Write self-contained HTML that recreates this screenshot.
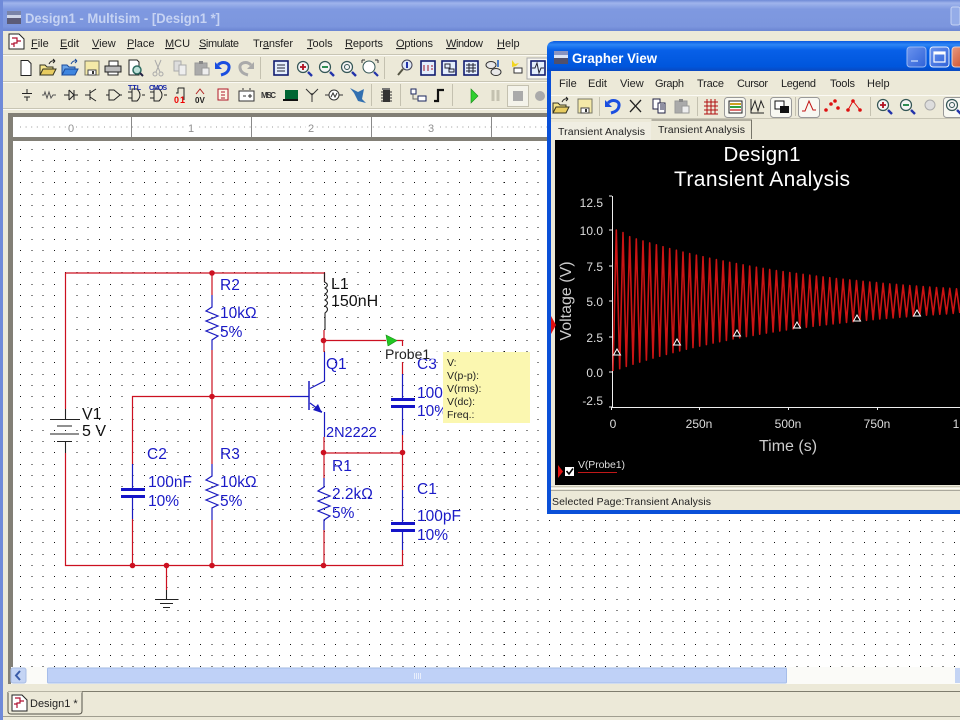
<!DOCTYPE html>
<html><head><meta charset="utf-8"><title>Multisim</title>
<style>html,body{margin:0;padding:0;background:#ece9d8;overflow:hidden}svg{display:block}text{font-family:"Liberation Sans",sans-serif}</style></head>
<body>
<svg width="960" height="720" viewBox="0 0 960 720" xmlns="http://www.w3.org/2000/svg">
<defs>
<linearGradient id="tb" x1="0" y1="0" x2="0" y2="1"><stop offset="0" stop-color="#6f8ad6"/><stop offset=".1" stop-color="#9fb4ec"/><stop offset=".3" stop-color="#7f99e0"/><stop offset=".85" stop-color="#7c96de"/><stop offset="1" stop-color="#6b85d2"/></linearGradient>
<linearGradient id="gb" x1="0" y1="0" x2="0" y2="1"><stop offset="0" stop-color="#0a5ae0"/><stop offset=".12" stop-color="#2d86f5"/><stop offset=".3" stop-color="#0860e8"/><stop offset=".85" stop-color="#0056dc"/><stop offset="1" stop-color="#0a48c0"/></linearGradient>
<linearGradient id="btn" x1="0" y1="0" x2="1" y2="1"><stop offset="0" stop-color="#6a93ee"/><stop offset="1" stop-color="#2f62d8"/></linearGradient>
<linearGradient id="cl" x1="0" y1="0" x2="1" y2="1"><stop offset="0" stop-color="#e89a80"/><stop offset="1" stop-color="#c8421c"/></linearGradient>
<g id="doc"><path d="M-5-7.500H2L5-4.500V7.500H-5Z" fill="#fff" stroke="#222"/></g>
<g id="open"><path d="M-8 7V-3H-3L-1-1H5V7Z" fill="#f6e58c" stroke="#332"/><path d="M-8 7L-5 1H8L5 7Z" fill="#e8cc60" stroke="#332"/><path d="M1-4Q3-8 7-7M7-7L5-9M7-7L5-5" stroke="#222" fill="none"/></g>
<g id="bfold"><path d="M-8 7V-3H-3L-1-1H5V7Z" fill="#6aa4e8" stroke="#1c4c9c"/><path d="M-8 7L-5 1H8L5 7Z" fill="#3f86e0" stroke="#1c4c9c"/><path d="M1-4Q3-8 7-7M7-7L5-9M7-7L5-5" stroke="#1c4c9c" fill="none"/></g>
<g id="save"><path d="M-7-7H7V7H-7Z" fill="#f4e9a8" stroke="#776"/><path d="M-4 2H4V7H-4Z" fill="#fff" stroke="#444"/><path d="M1 3V6" stroke="#333" stroke-width="2"/></g>
<g id="print"><path d="M-4-7H5V-2H-4Z" fill="#fff" stroke="#222"/><path d="M-8-2H8V4H-8Z" fill="#bbb" stroke="#222"/><path d="M-5 4H5V7H-5Z" fill="#fff" stroke="#222"/></g>
<g id="prev"><path d="M-6-8H2L4-6V7H-6Z" fill="#fff" stroke="#222"/><circle cx="2" cy="2" r="4" fill="#bde0d8" stroke="#2c6c60" stroke-width="1.500"/><path d="M5 5L8 8" stroke="#224" stroke-width="2"/></g>
<g id="cut"><path d="M-3-8L2 4M3-8L-2 4" stroke="#aaa" fill="none"/><circle cx="-3" cy="6" r="2" fill="none" stroke="#aaa"/><circle cx="3" cy="6" r="2" fill="none" stroke="#aaa"/></g>
<g id="copyg"><path d="M-6-7H1V3H-6Z" fill="#ddd" stroke="#aaa"/><path d="M-1-3H6V7H-1Z" fill="#eee" stroke="#aaa"/></g>
<g id="pasteg"><path d="M-7-5H5V7H-7Z" fill="#aaa" stroke="#999"/><path d="M-3-7H1V-4H-3Z" fill="#888"/><path d="M0 0H7V7H0Z" fill="#eee" stroke="#999"/></g>
<g id="copyk"><path d="M-6-7H1V3H-6Z" fill="#fff" stroke="#224"/><path d="M-1-3H6V7H-1Z" fill="#fff" stroke="#224"/><path d="M1-1H5M1 1H5M1 3H5" stroke="#224"/></g>
<g id="undo"><path d="M-8-6V1H-1Z" fill="#1a4ee0"/><path d="M-5-3C-1-7 7-6 6 0C5.500 4 2 6-2 7" fill="none" stroke="#1a4ee0" stroke-width="3"/></g>
<g id="redo"><path d="M8-6V1H1Z" fill="#aaa"/><path d="M5-3C1-7-7-6-6 0C-5.500 4-2 6 2 7" fill="none" stroke="#aaa" stroke-width="3"/></g>
<g id="zin"><circle cx="-1" cy="-1" r="5.500" fill="#f4f4f4" stroke="#355" stroke-width="1.200"/><path d="M4 4L8 8" stroke="#23a" stroke-width="2.400"/><path d="M-4-1H2M-1-4V2" stroke="#b01020" stroke-width="1.800"/></g>
<g id="zout"><circle cx="-1" cy="-1" r="5.500" fill="#f4f4f4" stroke="#355" stroke-width="1.200"/><path d="M4 4L8 8" stroke="#23a" stroke-width="2.400"/><path d="M-4-1H2" stroke="#178040" stroke-width="1.800"/></g>
<g id="zfit"><circle cx="-1" cy="-1" r="5.500" fill="#f4f4f4" stroke="#355" stroke-width="1.200"/><path d="M4 4L8 8" stroke="#23a" stroke-width="2.400"/><circle cx="-1" cy="-1" r="2.500" fill="none" stroke="#355"/></g>
<g id="zarea"><circle cx="-1" cy="-1" r="6" fill="#fff" stroke="#355"/><path d="M4 4L8 8" stroke="#23a" stroke-width="2.200"/><path d="M-8-8H-5M-8-8V-5M5-8H8M8-8V-5" stroke="#333"/></g>
<g id="panel"><rect x="-7" y="-7" width="14" height="14" fill="#e4eefc" stroke="#111c70" stroke-width="1.600"/></g>
<g id="mag"><circle cx="2" cy="-3" r="5" fill="#dfe8f8" stroke="#445"/><path d="M-2 1L-7 7" stroke="#554" stroke-width="2"/><path d="M2-6V0" stroke="#23a" stroke-width="2"/></g>
</defs>

<!-- window frame -->
<rect width="960" height="720" fill="#ece9d8"/>
<rect width="960" height="31" fill="url(#tb)"/>
<rect x="0" y="0" width="3" height="720" fill="#6f8ad9"/>
<g transform="translate(14,17)"><rect x="-7" y="-6" width="14" height="4" fill="#7a84a8"/><rect x="-7" y="-2" width="14" height="3" fill="#cfd6e8"/><rect x="-7" y="1" width="14" height="6" fill="#5c5c78"/></g>
<text x="25" y="23" font-size="14" font-weight="bold" fill="#c6d3f3" textLength="195" lengthAdjust="spacingAndGlyphs">Design1 - Multisim - [Design1 *]</text>
<rect x="951" y="7" width="9" height="18" rx="2" fill="#94ace8" stroke="#c6d3f3"/>

<!-- menu -->
<rect x="3" y="31" width="957" height="23" fill="#ece9d8"/>
<g transform="translate(16,43)"><path d="M-7-9H3L8-4V6H-7Z" fill="#fff" stroke="#222"/><path d="M-4-5H1V0H-2V4M1-2H5M-5 1H-2" fill="none" stroke="#b01030" stroke-width="1.200"/></g>
<g font-size="11" fill="#222">
<text x="31" y="47"><tspan text-decoration="underline">F</tspan>ile</text>
<text x="60" y="47"><tspan text-decoration="underline">E</tspan>dit</text>
<text x="92" y="47"><tspan text-decoration="underline">V</tspan>iew</text>
<text x="127" y="47"><tspan text-decoration="underline">P</tspan>lace</text>
<text x="165" y="47"><tspan text-decoration="underline">M</tspan>CU</text>
<text x="199" y="47" textLength="40"><tspan text-decoration="underline">S</tspan>imulate</text>
<text x="253" y="47" textLength="40">Tr<tspan text-decoration="underline">a</tspan>nsfer</text>
<text x="307" y="47"><tspan text-decoration="underline">T</tspan>ools</text>
<text x="345" y="47" textLength="38"><tspan text-decoration="underline">R</tspan>eports</text>
<text x="396" y="47" textLength="37"><tspan text-decoration="underline">O</tspan>ptions</text>
<text x="446" y="47" textLength="37"><tspan text-decoration="underline">W</tspan>indow</text>
<text x="497" y="47"><tspan text-decoration="underline">H</tspan>elp</text>
</g>
<path d="M3 54.500H960" stroke="#c8c5b4"/><path d="M3 55.500H960" stroke="#fbfaf4"/>
<path d="M3 81.500H960" stroke="#c8c5b4"/><path d="M3 82.500H960" stroke="#fbfaf4"/>
<path d="M3 108.500H960" stroke="#c8c5b4"/><path d="M3 109.500H960" stroke="#fbfaf4"/>

<!-- toolbar 1 -->
<use href="#doc" x="26" y="68"/><use href="#open" x="48" y="68"/><use href="#bfold" x="70" y="68"/><use href="#save" x="92" y="68"/><use href="#print" x="113" y="68"/><use href="#prev" x="135" y="68"/><use href="#cut" x="158" y="68"/><use href="#copyg" x="180" y="68"/><use href="#pasteg" x="202" y="68"/><use href="#undo" x="223" y="68"/><use href="#redo" x="246" y="68"/>
<path d="M260.500 57V79M384.500 57V79" stroke="#c4c1b0"/>
<use href="#panel" x="281" y="68"/><path d="M277 65H285M277 68H285M277 71H285" stroke="#223"/>
<use href="#zin" x="304" y="68"/><use href="#zout" x="326" y="68"/><use href="#zfit" x="348" y="68"/><use href="#zarea" x="370" y="68"/>
<use href="#mag" x="405" y="68"/>
<use href="#panel" x="428" y="68"/><path d="M424 65V71M428 65V71M431 66H433M431 69H433" stroke="#a01020"/>
<use href="#panel" x="449" y="68"/><path d="M445 64H450V68H445ZM449 69H454V72H449Z" fill="none" stroke="#223"/>
<use href="#panel" x="471" y="68"/><path d="M466 65H476M466 68H476M466 71H476M469 63V73M473 63V73" stroke="#223"/>
<ellipse cx="491" cy="65" rx="5" ry="3.500" fill="#e8e8e8" stroke="#333"/><ellipse cx="496" cy="72" rx="5" ry="3.500" fill="#e8e8e8" stroke="#333"/><path d="M498 60V67" stroke="#1a5ac0" stroke-width="1.500"/>
<path d="M512 60L515 64L519 63L516 66L512 67Z" fill="#f2d620"/><rect x="514" y="68" width="8" height="5" fill="#fff" stroke="#333"/>
<rect x="527" y="58" width="21" height="21" fill="#f8f7f0" stroke="#aaa"/><use href="#panel" x="538" y="68"/><path d="M532 68H535L537 63L539 73L541 68H544" stroke="#223" fill="none"/>

<!-- toolbar 2 -->
<g fill="none" stroke="#222">
<path d="M27 89V93M22 93.500H32M24 97H30M27 97V101"/>
<path d="M42 95H44L45 92L47 98L49 92L51 98L53 95H56" stroke="#555"/>
<path d="M64 95H69M74 95H78M69 90V100M74 90V100M69 90L74 95L69 100" />
<path d="M85 95H90M90 90V100M90 93L96 89M90 97L96 101"/>
<path d="M106 95H109M109 90H114L120 95L114 100H109ZM120 95H122"/>
<path d="M128 92H132M128 98H132M132 89V101H137Q143 95 137 89ZM142 95H145"/>
</g>
<text x="128" y="90" font-size="7" font-weight="bold" fill="#1a2aa8" textLength="13">TTL</text>
<path d="M150 92H154M150 98H154M154 89V101H159Q165 95 159 89ZM164 95H167" fill="none" stroke="#222"/>
<text x="149" y="90" font-size="7" font-weight="bold" fill="#1a2aa8" textLength="18">CMOS</text>
<path d="M178 88H184V100M176 93H178V88" fill="none" stroke="#222"/><text x="174" y="103" font-size="9" font-weight="bold" fill="#e00">0</text><text x="180" y="103" font-size="9" font-weight="bold" fill="#e00">1</text>
<path d="M196 94L200 89L204 94" fill="none" stroke="#b02020"/><text x="195" y="103" font-size="8" font-weight="bold" fill="#222">0V</text>
<rect x="218" y="89" width="10" height="11" fill="#fdf6e8" stroke="#b01828"/><path d="M221 92H225M221 95H225M221 98H225" stroke="#b01828"/>
<rect x="239" y="91" width="15" height="10" fill="#fff" stroke="#333"/><path d="M243 90V88M250 90V88" stroke="#333"/><path d="M243 96H246M250 94V98M248 96H252" stroke="#333"/>
<text x="261" y="98" font-size="8" font-weight="bold" fill="#333" textLength="15">MISC</text>
<rect x="285" y="90" width="13" height="9" fill="#063"/><path d="M283 100H298" stroke="#111" stroke-width="2"/>
<path d="M312 102V93M306 89L312 95L318 89" fill="none" stroke="#333"/>
<circle cx="334" cy="95" r="5" fill="#fff" stroke="#333"/><path d="M325 95H329M339 95H343M331 97L333 93L335 97L337 93" fill="none" stroke="#333"/>
<path d="M350 88L358 92L364 89L362 99L366 103L358 101L354 93Z" fill="#3270b0"/>
<path d="M371.500 84V106M400.500 84V106M452.500 84V106" stroke="#c4c1b0"/>
<rect x="383" y="90" width="7" height="12" fill="#333"/><path d="M381 92H392M381 95H392M381 98H392M381 101H392" stroke="#333"/><rect x="382" y="88" width="8" height="2" fill="#777"/>
<rect x="411" y="89" width="5" height="5" fill="#fff" stroke="#18245c"/><rect x="418" y="96" width="8" height="5" fill="#fff" stroke="#18245c"/><path d="M413 94V99H418" stroke="#666" fill="none"/>
<path d="M434 101H438V90H444" fill="none" stroke="#111" stroke-width="2.200"/>
<path d="M471 89L478 96L471 103Z" fill="#2fd02f" stroke="#1a8a1a" stroke-width=".6"/>
<path d="M493 90V101M498 90V101" stroke="#c4c1b0" stroke-width="3"/>
<rect x="507.500" y="85.500" width="21" height="21" fill="#f4f3ea" stroke="#c4c1b0"/><rect x="513" y="91" width="10" height="10" fill="#aaa"/>
<circle cx="540" cy="96" r="5" fill="#aaa"/>

<!-- canvas -->
<rect x="8" y="113" width="552" height="578" fill="#827f76"/>
<rect x="13" y="117" width="547" height="20" fill="#fff"/>
<rect x="13" y="141" width="947" height="526" fill="#fff"/>
<path d="M20 127H547" stroke="#999" stroke-dasharray="1 4.600"/>
<path d="M131.500 117V137M251.500 117V137M371.500 117V137M491.500 117V137" stroke="#8a8a8a"/>
<rect x="66" y="120" width="10" height="14" fill="#fff"/><rect x="186" y="120" width="10" height="14" fill="#fff"/><rect x="306" y="120" width="10" height="14" fill="#fff"/><rect x="426" y="120" width="10" height="14" fill="#fff"/>
<g font-size="11" fill="#8f8f8f" text-anchor="middle"><text x="71" y="132">0</text><text x="191" y="132">1</text><text x="311" y="132">2</text><text x="431" y="132">3</text></g>
<path shape-rendering="crispEdges" stroke="#111" stroke-dasharray="1 10.250" d="M20 149.500H960M20 160.500H960M20 171.500H960M20 182.500H960M20 194.500H960M20 205.500H960M20 216.500H960M20 227.500H960M20 239.500H960M20 250.500H960M20 261.500H960M20 272.500H960M20 284.500H960M20 295.500H960M20 306.500H960M20 317.500H960M20 329.500H960M20 340.500H960M20 351.500H960M20 362.500H960M20 374.500H960M20 385.500H960M20 396.500H960M20 407.500H960M20 419.500H960M20 430.500H960M20 441.500H960M20 452.500H960M20 464.500H960M20 475.500H960M20 486.500H960M20 497.500H960M20 509.500H960M20 520.500H960M20 531.500H960M20 542.500H960M20 554.500H960M20 565.500H960M20 576.500H960M20 587.500H960M20 599.500H960M20 610.500H960M20 621.500H960M20 632.500H960M20 644.500H960M20 655.500H960M20 666.500H960"/>

<!-- circuit: red wires -->
<g fill="none" stroke="#cc1020" stroke-width="1.200">
<path d="M65.500 409V273H324.500V282"/>
<path d="M65.500 453V565.500H402.500V550"/>
<path d="M212 273V295M212 350V464M212 520V565"/>
<path d="M290 396.500H132.500V464M132.500 519V565"/>
<path d="M324 330V352M324 437V478M324 530V565"/>
<path d="M324 340.500H386M396 340.500H402.500V346M402.500 362V374M402.500 435V490"/>
<path d="M324 453H402.500"/>
<path d="M166.500 565V590"/>
</g>
<!-- blue component leads -->
<g fill="none" stroke="#1a1ac0" stroke-width="1.200">
<path d="M212 295V307L206 311L218 316L206 321L218 326L206 331L218 336L212 340V350"/>
<path d="M212 464V476L206 480L218 485L206 490L218 495L206 500L218 505L212 508V520"/>
<path d="M324 478V487L318 491L330 496L318 501L330 506L318 511L330 516L324 520V530"/>
<path d="M132.500 464V488M132.500 497V519"/>
<path d="M402.500 374V398M402.500 407V435M402.500 490V523M402.500 531V550"/>
<path d="M290 396.500H309M324.500 352V381L310 388.500M310 403L322 412M324.500 412V437"/>
<path d="M309 381V410" stroke-width="1.500"/>
</g>
<path d="M322 413L313 410L318 404Z" fill="#1a1ac0"/>
<g stroke="#1414c8" stroke-width="3" fill="none">
<path d="M121 489.500H145M121 496.500H145"/>
<path d="M391 399.500H415M391 406.500H415"/>
<path d="M391 523.500H415M391 530.500H415"/>
</g>
<!-- black -->
<g fill="none" stroke="#222" stroke-width="1.100">
<path d="M65.500 409V419.500M50 419.500H80M57 426H72M50 434H79M57 441.500H72M65.500 441.500V453"/>
<path d="M324.500 273V282Q330 285 325 288Q330 291 325 294Q330 297 325 300Q330 303 325 306Q330 309 325 313V330"/>
<path d="M166.500 590V599M155 599.500H178M160 603.500H173M163 607.500H170"/>
</g>
<g fill="#cc1020"><circle cx="212" cy="273" r="2.800"/><circle cx="212" cy="396.500" r="2.800"/><circle cx="132.500" cy="565.500" r="2.800"/><circle cx="166.500" cy="565.500" r="2.800"/><circle cx="212" cy="565.500" r="2.800"/><circle cx="323.500" cy="340.500" r="2.800"/><circle cx="323.500" cy="452.500" r="2.800"/><circle cx="402.500" cy="452.500" r="2.800"/><circle cx="323.500" cy="565.500" r="2.800"/></g>
<path d="M386 335L397 340.500L388 346Z" fill="#22c822" stroke="#189018" stroke-width=".6"/>

<g font-size="15.500" fill="#1a1ac8">
<text x="220" y="290">R2</text><text x="220" y="318">10kΩ</text><text x="220" y="337">5%</text>
<text x="147" y="459">C2</text><text x="148" y="487">100nF</text><text x="148" y="506">10%</text>
<text x="220" y="459">R3</text><text x="220" y="487">10kΩ</text><text x="220" y="506">5%</text>
<text x="326" y="369">Q1</text><text x="326" y="437" font-size="14.500">2N2222</text>
<text x="332" y="471">R1</text><text x="332" y="499">2.2kΩ</text><text x="332" y="518">5%</text>
<text x="417" y="494">C1</text><text x="417" y="521">100pF</text><text x="417" y="540">10%</text>
<text x="417" y="369">C3</text><text x="417" y="398">100</text><text x="417" y="416">10%</text>
</g>
<g font-size="16" fill="#111">
<text x="82" y="419">V1</text><text x="82" y="436">5 V</text>
<text x="331" y="289">L1</text><text x="331" y="306">150nH</text>
</g>
<rect x="385" y="346" width="60" height="13" fill="#fff" fill-opacity=".7"/>
<text x="385" y="359" font-size="14" fill="#222">Probe1</text>
<rect x="443" y="352" width="87" height="71" fill="#fbf7b0"/>
<g font-size="10.500" fill="#222"><text x="447" y="366">V:</text><text x="447" y="379">V(p-p):</text><text x="447" y="392">V(rms):</text><text x="447" y="405">V(dc):</text><text x="447" y="418">Freq.:</text></g>

<!-- scrollbar -->
<rect x="11" y="667" width="949" height="17" fill="#fbfbf8"/>
<rect x="11" y="668" width="15" height="15" rx="2" fill="#c4d4f4" stroke="#a8bce4"/>
<path d="M20 671L16 675.500L20 680" fill="none" stroke="#3a5ca8" stroke-width="2"/>
<rect x="47.500" y="668" width="739" height="15" rx="1" fill="#bfd1f7" stroke="#a6bde9"/>
<path d="M414.500 673V679M416.500 673V679M418.500 673V679M420.500 673V679" stroke="#e8eefc"/>
<rect x="955" y="668" width="5" height="15" fill="#c4d4f4"/>
<rect x="3" y="684" width="957" height="7" fill="#ece9d8"/>
<rect x="3" y="667" width="5" height="24" fill="#ece9d8"/>
<path d="M8 691.500H960" stroke="#7f7d6e"/>
<rect x="3" y="692" width="957" height="24" fill="#ece9d8"/>
<path d="M960 716.500H3" stroke="#a09e90"/>
<path d="M8 692V711Q8 714 11 714H79Q82 714 82 711V692" fill="#ece9d8" stroke="#55534a"/>
<path d="M8 692H82" stroke="#ece9d8"/>
<g transform="translate(19,703)"><path d="M-7-8H3L8-3V8H-7Z" fill="#fff" stroke="#222"/><path d="M-4-5H1V0H-2V5M1-2H5M-5 1H-2" fill="none" stroke="#b01030" stroke-width="1.200"/></g>
<text x="30" y="707" font-size="11" fill="#222">Design1 *</text>

<!-- grapher window -->
<path d="M547 514V50Q547 41 556 41H960V514Z" fill="#0a50d8"/>
<path d="M547 71V48Q547 41 556 41H960V71Z" fill="url(#gb)"/>
<rect x="551" y="71" width="409" height="439" fill="#ece9d8"/>
<g transform="translate(561,57)"><rect x="-7" y="-6" width="14" height="4" fill="#8a94c0"/><rect x="-7" y="-2" width="14" height="3" fill="#dde4f4"/><rect x="-7" y="1" width="14" height="6" fill="#50506c"/></g>
<text x="572" y="63" font-size="13.500" font-weight="bold" fill="#fff" textLength="85" lengthAdjust="spacingAndGlyphs">Grapher View</text>
<rect x="907" y="47" width="19" height="20" rx="3" fill="url(#btn)" stroke="#9ab8f2"/><rect x="911" y="60" width="7" height="2" fill="#9ab8f2"/>
<rect x="930" y="47" width="19" height="20" rx="3" fill="url(#btn)" stroke="#e8f0fc"/><rect x="934" y="52" width="11" height="10" fill="none" stroke="#fff" stroke-width="1.200"/><path d="M934 53.500H945" stroke="#fff" stroke-width="2"/>
<rect x="952" y="47" width="19" height="20" rx="3" fill="url(#cl)" stroke="#e8d0c8"/>
<g font-size="11" fill="#222">
<text x="559" y="87">File</text><text x="588" y="87">Edit</text><text x="620" y="87">View</text><text x="655" y="87" textLength="29">Graph</text><text x="697" y="87" textLength="27">Trace</text><text x="737" y="87" textLength="31">Cursor</text><text x="781" y="87" textLength="35">Legend</text><text x="830" y="87" textLength="25">Tools</text><text x="867" y="87">Help</text>
</g>
<path d="M551 95.500H960" stroke="#fbfaf4"/><path d="M551 118.500H960" stroke="#c8c5b4"/>
<use href="#open" x="561" y="106"/><use href="#save" x="585" y="106"/>
<path d="M599.500 97V116M697.500 97V116M795.500 97V116M870.500 97V116" stroke="#c4c1b0"/>
<use href="#undo" x="613" y="106"/><path d="M630 100L641 112M641 100L630 112" stroke="#222" stroke-width="1.300"/>
<use href="#copyk" x="659" y="106"/><use href="#pasteg" x="682" y="106"/>
<path d="M704 102H718M704 106H718M704 110H718M704 114H718M707 99V114M711 99V114M715 99V114" stroke="#b01010"/>
<rect x="724.500" y="97.500" width="21" height="20" rx="3" fill="#f8f8f2" stroke="#999"/><rect x="729" y="101" width="13" height="12" fill="#fff" stroke="#222"/><path d="M730 104H741" stroke="#d0a020" stroke-width="2"/><path d="M730 107H741" stroke="#30a040" stroke-width="2"/><path d="M730 110H741" stroke="#d04040" stroke-width="1.500"/>
<path d="M751 99V113H764M751 111L755 101L758 111L761 101L764 108" fill="none" stroke="#222"/>
<rect x="770.500" y="97.500" width="21" height="20" rx="3" fill="#f8f8f2" stroke="#999"/><rect x="775" y="101" width="9" height="8" fill="#fff" stroke="#111"/><rect x="780" y="106" width="9" height="7" fill="#111"/>
<rect x="798.500" y="97.500" width="21" height="20" rx="3" fill="#f8f8f2" stroke="#999"/><path d="M802 111H805L809 101L813 110H816" fill="none" stroke="#c01010"/>
<g fill="#dd1010"><circle cx="826" cy="110" r="1.800"/><circle cx="831" cy="104" r="1.800"/><circle cx="835" cy="101" r="1.800"/><circle cx="838" cy="108" r="1.800"/><circle cx="848" cy="110" r="1.800"/><circle cx="853" cy="101" r="1.800"/><circle cx="860" cy="110" r="1.800"/></g>
<path d="M848 110L853 101L860 110" fill="none" stroke="#dd1010"/>
<use href="#zin" x="884" y="106"/><use href="#zout" x="907" y="106"/>
<circle cx="930" cy="105" r="5" fill="#ddd" stroke="#aaa"/>
<rect x="943.500" y="97.500" width="20" height="20" rx="3" fill="#f8f8f2" stroke="#999"/><use href="#zfit" x="953" y="106"/>

<!-- tabs -->
<rect x="551" y="119" width="409" height="21" fill="#ece9d8"/>
<path d="M651.500 120H752M751.500 120V139" fill="none" stroke="#77756a"/>
<rect x="551" y="122" width="100" height="18" fill="#f0eee2"/>
<text x="558" y="135" font-size="10.500" fill="#222" textLength="87">Transient Analysis</text>
<text x="658" y="133" font-size="10.500" fill="#222" textLength="87">Transient Analysis</text>

<!-- plot -->
<rect x="555" y="140" width="405" height="345" fill="#000"/>
<path d="M551 486.500H960" stroke="#c8c5b4"/><path d="M551 488.500H960" stroke="#fbfaf4"/>
<rect x="551" y="489" width="409" height="21" fill="#ece9d8"/>
<path d="M551 490.500H960" stroke="#aaa89c"/>
<text x="552" y="505" font-size="10.500" fill="#222" textLength="159">Selected Page:Transient Analysis</text>
<rect x="547" y="510" width="413" height="4" fill="#0a50d8"/>

<g fill="#fff" text-anchor="middle">
<text x="762" y="161" font-size="20.500" textLength="77">Design1</text>
<text x="762" y="186" font-size="21" textLength="176">Transient Analysis</text>
</g>
<path d="M612.500 196V407.500H960M609 196H612M609 230H612M609 266H612M609 301H612M609 337H612M609 372H612M609 407H612M611.500 407V410M699.500 407V410M788.500 407V410M877.500 407V410" fill="none" stroke="#eee"/>
<g font-size="12" fill="#ddd" text-anchor="end"><text x="603" y="207">12.5</text><text x="603" y="235">10.0</text><text x="603" y="271">7.5</text><text x="603" y="306">5.0</text><text x="603" y="342">2.5</text><text x="603" y="377">0.0</text><text x="603" y="405">-2.5</text></g>
<g font-size="12" fill="#ddd" text-anchor="middle"><text x="613" y="428">0</text><text x="699" y="428">250n</text><text x="788" y="428">500n</text><text x="877" y="428">750n</text><text x="956" y="428">1</text></g>
<text x="788" y="451" font-size="16" fill="#ccc" text-anchor="middle">Time (s)</text>
<text transform="translate(571,301) rotate(-90)" font-size="16" fill="#ccc" text-anchor="middle">Voltage (V)</text>
<path d="M551 316L556 325L551 334Z" fill="#e01010"/>

<polyline fill="none" stroke="#cc1414" stroke-width="1.600" stroke-linejoin="round" points="613,371 616.300,230 619.700,368.700 623,232.500 626.300,366.400 629.700,236.700 633,364.200 636.300,238.900 639.700,362.100 643,240.900 646.400,360.100 649.700,242.900 653,358.100 656.400,244.800 659.700,356.200 663,246.700 666.400,354.400 669.700,248.500 673,352.600 676.400,250.200 679.700,350.900 683,252 686.400,349.200 689.700,253.600 693,347.600 696.400,255.200 699.700,346.100 703,256.700 706.400,344.600 709.700,258.200 713.100,343.100 716.400,259.600 719.700,341.700 723.100,260.900 726.400,340.400 729.700,262.300 733.100,339 736.400,263.600 739.700,337.800 743.100,264.800 746.400,336.600 749.700,266 753.100,335.400 756.400,267.200 759.700,334.200 763.100,268.300 766.400,333.100 769.700,269.400 773.100,332 776.400,270.500 779.800,331 783.100,271.500 786.400,330 789.800,272.500 793.100,329 796.400,273.400 799.800,328.100 803.100,274.300 806.400,327.200 809.800,275.200 813.100,326.300 816.400,276.100 819.800,325.500 823.100,276.900 826.400,324.700 829.800,277.700 833.100,323.900 836.400,278.500 839.800,323.100 843.100,279.200 846.500,322.400 849.800,279.900 853.100,321.700 856.500,280.600 859.800,321 863.100,281.300 866.500,320.300 869.800,282 873.100,319.700 876.500,282.600 879.800,319 883.100,283.300 886.500,318.400 889.800,283.900 893.100,317.900 896.500,284.400 899.800,317.300 903.100,285 906.500,316.800 909.800,285.500 913.200,316.200 916.500,286 919.800,315.700 923.200,286.500 926.500,315.200 929.800,287 933.200,314.800 936.500,287.500 939.800,314.300 943.200,287.900 946.500,313.900 949.800,288.300 953.200,313.400 956.500,288.800 959.800,313"/>
<g fill="#000" stroke="#fff" stroke-width="1"><path d="M617 349L620.500 355H613.500Z"/><path d="M677 339L680.500 345H673.500Z"/><path d="M737 330L740.500 336H733.500Z"/><path d="M797 322L800.500 328H793.500Z"/><path d="M857 315L860.500 321H853.500Z"/><path d="M917 310L920.500 316H913.500Z"/></g>

<path d="M558 465L563 471.500L558 478Z" fill="#e01010"/>
<rect x="565" y="467" width="9" height="9" fill="#fff"/><path d="M566.500 471L569 474L573 468.500" fill="none" stroke="#000" stroke-width="1.600"/>
<text x="578" y="468" font-size="10.500" fill="#ddd" textLength="47">V(Probe1)</text>
<path d="M578 472.500H617" stroke="#c01818"/>
</svg>
</body></html>
